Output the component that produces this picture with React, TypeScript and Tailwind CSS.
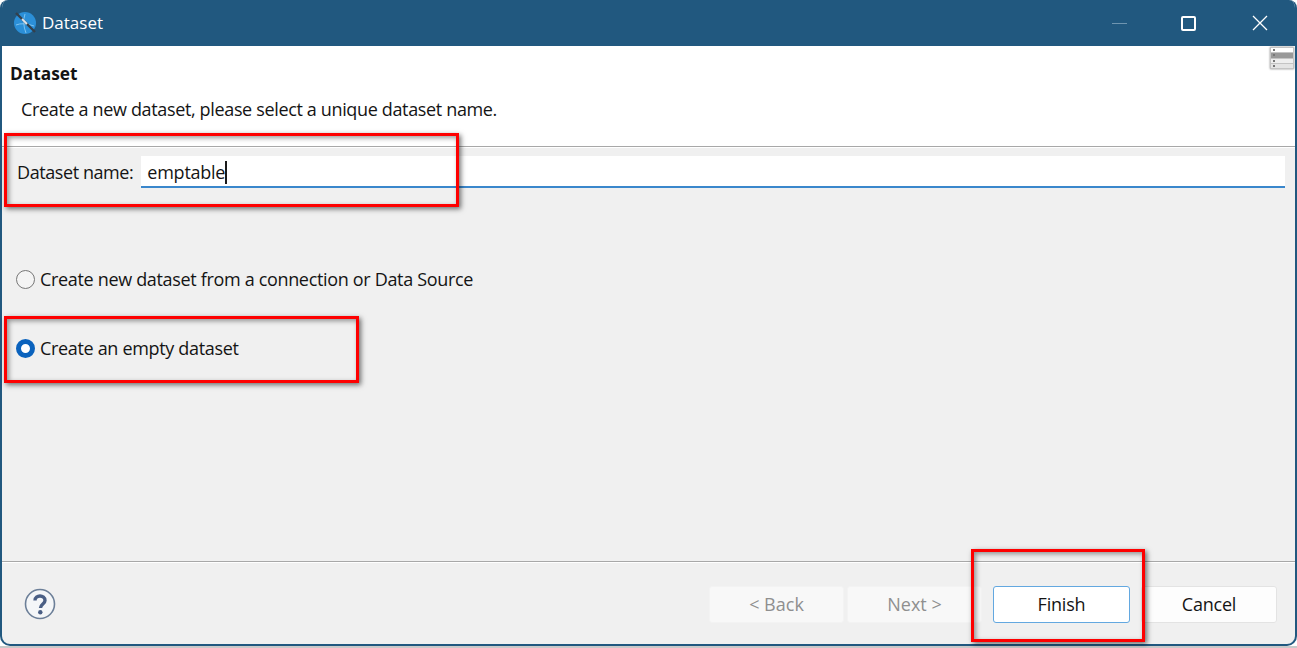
const font = { fontFamily: '"Open Sans", "Noto Sans", sans-serif' };

function AppIcon() {
  return (
    <svg width="24" height="24" viewBox="0 0 24 24">
      <circle cx="12" cy="12" r="11" fill="#2b8fd8" />
      <path d="M3 14 Q10 11 21 15" stroke="#7cc4f2" strokeWidth="1" fill="none" />
      <path d="M12 3 Q9 12 13 22" stroke="#7cc4f2" strokeWidth="1" fill="none" />
      <path d="M3 2 L22 21" stroke="#33404c" strokeWidth="2.4" />
      <path d="M9 8 L14 13" stroke="#dfe6ec" strokeWidth="2" />
    </svg>
  );
}

function ViewMenu() {
  const rows = ["bg-white", "bg-[#999999]", "bg-[#eeeeee]", "bg-[#e4e4e4]"];
  return (
    <div className="absolute right-[1px] top-[1px] w-[24px] h-[22px] bg-[#c4c4c4] p-[1px] flex flex-col gap-[1px] shadow-[0_0_2px_#888]">
      {rows.map((row) => (
        <div key={row} className={`flex-1 pl-[2px] flex items-center ${row}`}>
          <div className="w-[2px] h-[2px] bg-[#777777]" />
        </div>
      ))}
    </div>
  );
}

function RedBox({ className }: { className: string }) {
  return (
    <div className={`absolute border-[3px] border-[#fe0000] shadow-[2px_2px_5px_rgba(0,0,0,0.55),inset_2px_2px_5px_rgba(0,0,0,0.4)] ${className}`} />
  );
}

function WizardButton({ label, kind }: { label: string; kind: "disabled" | "default" | "normal" }) {
  const styles = {
    disabled: "w-[135px] bg-[#f8f8f8] border-[#f3f3f3] text-[#8f8f8f]",
    default: "w-[137px] bg-white border-[#63a8e0] text-[#141414] tracking-[-0.2px]",
    normal: "w-[136px] bg-[#fdfdfd] border-[#e3e3e3] text-[#141414] tracking-[-0.2px]",
  };
  return (
    <button className={`h-[37px] rounded-[3px] border text-[18px] flex items-center justify-center ${styles[kind]}`}>
      {label}
    </button>
  );
}

export default function App() {
  return (
    <div className="relative w-[1297px] h-[648px] bg-white overflow-hidden text-[#141414] flex flex-col" style={font}>
      <div className="h-[646px] shrink-0 flex flex-col bg-[#f0f0f0] border-x-2 border-b-2 border-[#21587f] rounded-t-[8px] rounded-b-[10px] overflow-hidden">
        {/* Title bar */}
        <div className="h-[46px] -mx-[2px] bg-[#21587f] flex items-center pl-[13px] shrink-0 text-white">
          <AppIcon />
          <span className="ml-[5px] text-[17px]">Dataset</span>
          <div className="ml-auto flex items-center">
            <div className="w-[15px] h-px bg-[#6f95b0] mr-[54px]" />
            <div className="w-[15px] h-[15px] border-2 border-white rounded-[2px] mr-[56px]" />
            <svg width="16" height="16" viewBox="0 0 16 16" className="mr-[29px]">
              <path d="M1 1 L15 15 M15 1 L1 15" stroke="white" strokeWidth="1.3" />
            </svg>
          </div>
        </div>

        {/* Header */}
        <div className="relative h-[100px] bg-white shrink-0 pl-[8px] pt-[16px]">
          <ViewMenu />
          <div className="font-bold text-[17.3px] leading-[24px]">Dataset</div>
          <div className="mt-[11px] ml-[11px] text-[18px] tracking-[-0.35px] leading-[24px]">
            Create a new dataset, please select a unique dataset name.
          </div>
        </div>
        <div className="h-[2px] bg-[#a8a8a8] border-b border-white shrink-0" />

        {/* Body */}
        <div className="flex-1 flex flex-col pl-[14px]">
          <div className="flex items-center mt-[8px] h-[32px]">
            <label className="ml-px text-[18px] tracking-[-0.42px]">Dataset name:</label>
            <div className="ml-[8px] mr-[10px] flex-1 h-[32px] bg-white border-b-2 border-[#3a87cc] pl-[6px] pt-[2px] flex items-center text-[18px] tracking-[-0.25px]">
              emptable<span className="w-[2px] h-[23px] bg-[#1a1a1a]" />
            </div>
          </div>
          <div className="flex items-center mt-[79px] h-[24px] text-[18px] tracking-[-0.33px]">
            <div className="w-[19px] h-[19px] rounded-full border border-[#777777] bg-[#f4f4f4]" />
            <span className="ml-[5px]">Create new dataset from a connection or Data Source</span>
          </div>
          <div className="flex items-center mt-[45px] h-[24px] text-[18px] tracking-[-0.33px]">
            <div className="w-[19px] h-[19px] rounded-full border-[5px] border-[#0a62bd] bg-white" />
            <span className="ml-[5px]">Create an empty dataset</span>
          </div>
        </div>

        {/* Footer */}
        <div className="h-[2px] bg-[#a8a8a8] border-b border-white shrink-0" />
        <div className="h-[81px] shrink-0 flex items-center pl-[22px] pr-[18px] pt-px">
          <svg width="32" height="32" viewBox="0 0 32 32">
            <circle cx="16" cy="16" r="14.5" fill="#f4f6f8" stroke="#6c7f98" strokeWidth="1.6" />
            <path d="M11 12.5 C11 6.5 21 6.5 21 12.5 C21 16 16.5 16 16.5 20" stroke="#4a5f85" strokeWidth="3.4" fill="none" />
            <circle cx="16.3" cy="24.2" r="2.2" fill="#4a5f85" />
          </svg>
          <div className="ml-auto flex items-center">
            <WizardButton label="< Back" kind="disabled" />
            <div className="w-[3px]" />
            <WizardButton label="Next >" kind="disabled" />
            <div className="w-[11px]" />
            <WizardButton label="Finish" kind="default" />
            <div className="w-[11px]" />
            <WizardButton label="Cancel" kind="normal" />
          </div>
        </div>
      </div>
      <div className="flex-1 bg-[#c9c9c9]" />

      {/* Annotations */}
      <RedBox className="left-[4px] top-[133px] w-[455px] h-[74px]" />
      <RedBox className="left-[4px] top-[316px] w-[355px] h-[67px]" />
      <RedBox className="left-[971px] top-[549px] w-[174px] h-[93px]" />
    </div>
  );
}
